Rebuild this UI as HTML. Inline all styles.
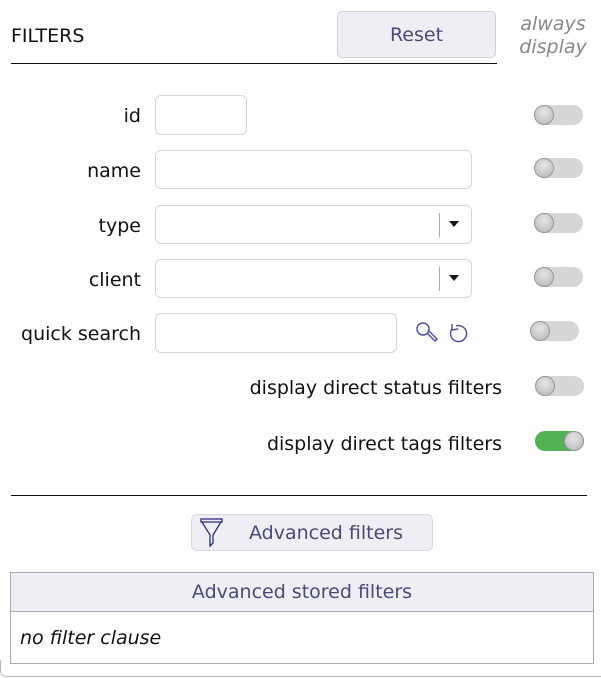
<!DOCTYPE html>
<html><head><style>
*{box-sizing:border-box;margin:0;padding:0}
body{width:601px;height:678px;background:#fff;font-family:"DejaVu Sans","Liberation Sans",sans-serif;color:#111;position:relative;overflow:hidden}
.a{position:absolute}
.lbl{position:absolute;right:460px;font-size:19px;line-height:22px;text-align:right;white-space:nowrap}
.inp{position:absolute;border:1px solid #d4d4d4;border-radius:6px;background:#fff}
.tg{position:absolute;width:49px;height:20px;border-radius:10px;background:#d6d6d6}
.tg::after{content:"";position:absolute;left:0;top:0;width:20px;height:20px;border-radius:50%;background:radial-gradient(circle at 50% 35%,#e6e6e6,#b5b5b5);border:1px solid #999;box-sizing:border-box}
.tg.on{background:#52b152}
.tg.on::after{left:29px}
.sel .dv{position:absolute;left:283px;top:7px;width:1px;height:24px;background:#aaa}
.sel .ar{position:absolute;left:293px;top:15px;width:0;height:0;border-left:5px solid transparent;border-right:5px solid transparent;border-top:6px solid #111}
</style></head><body>
<div class="a" style="left:11px;top:25px;font-size:19px">FILTERS</div>
<div class="a" style="left:337px;top:11px;width:159px;height:47px;background:#efeef5;border:1px solid #cfcfd8;border-radius:5px;color:#4a4a7a;font-size:19px;text-align:center;line-height:47px">Reset</div>
<div class="a" style="left:11px;top:63px;width:486px;height:1px;background:#111"></div>
<div class="a" style="left:508px;top:13px;width:90px;color:#888;font-style:italic;font-size:19px;line-height:23px;text-align:center">always<br>display</div>

<div class="lbl" style="top:105px">id</div>
<div class="inp" style="left:155px;top:95px;width:92px;height:40px"></div>
<div class="tg" style="left:534px;top:105px"></div>

<div class="lbl" style="top:160px">name</div>
<div class="inp" style="left:155px;top:150px;width:317px;height:39px"></div>
<div class="tg" style="left:534px;top:158px"></div>

<div class="lbl" style="top:215px">type</div>
<div class="inp sel" style="left:155px;top:205px;width:317px;height:39px"><div class="dv"></div><div class="ar"></div></div>
<div class="tg" style="left:534px;top:213px"></div>

<div class="lbl" style="top:269px">client</div>
<div class="inp sel" style="left:155px;top:259px;width:317px;height:39px"><div class="dv"></div><div class="ar"></div></div>
<div class="tg" style="left:534px;top:267px"></div>

<div class="lbl" style="top:323px">quick search</div>
<div class="inp" style="left:155px;top:313px;width:242px;height:40px"></div>
<svg class="a" style="left:414px;top:320px" width="60" height="26" viewBox="0 0 60 26" fill="none" stroke="#4a4aa0" stroke-width="1.4">
<circle cx="9" cy="9" r="6"/><path d="M13 13 L21 21 L23 19 L15 11"/>
<path d="M42 6 A8 8 0 1 1 38 9"/><path d="M38 4 L38 10 L44 9"/>
</svg>
<div class="tg" style="left:530px;top:321px"></div>

<div class="a" style="right:99px;top:377px;font-size:19px;white-space:nowrap">display direct status filters</div>
<div class="tg" style="left:535px;top:376px"></div>
<div class="a" style="right:99px;top:433px;font-size:19px;white-space:nowrap">display direct tags filters</div>
<div class="tg on" style="left:535px;top:431px"></div>

<div class="a" style="left:11px;top:495px;width:576px;height:1px;background:#111"></div>
<div class="a" style="left:191px;top:514px;width:242px;height:37px;background:#efeef5;border:1px solid #d8d8e0;border-radius:6px"></div>
<svg class="a" style="left:200px;top:518px" width="24" height="30" viewBox="0 0 24 30" fill="none" stroke="#2a2a80" stroke-width="1.3">
<path d="M1 1 H22 V4 H1 Z"/><path d="M2 4 L10 17 V28 L13 25 V17 L21 4"/>
</svg>
<div class="a" style="left:249px;top:522px;font-size:19px;color:#4a4a7a">Advanced filters</div>

<div class="a" style="left:0;top:660px;width:601px;height:17px;border-left:1px solid #bbb;border-bottom:1px solid #bbb;border-bottom-left-radius:6px"></div>
<div class="a" style="left:10px;top:572px;width:584px;height:92px;border:1px solid #aaa;background:#fff"></div>
<div class="a" style="left:11px;top:573px;width:582px;height:39px;background:#efeef5;border-bottom:1px solid #aaa;color:#4a4a7a;font-size:19px;text-align:center;line-height:38px">Advanced stored filters</div>
<div class="a" style="left:20px;top:627px;font-size:19px;font-style:italic">no filter clause</div>
</body></html>
